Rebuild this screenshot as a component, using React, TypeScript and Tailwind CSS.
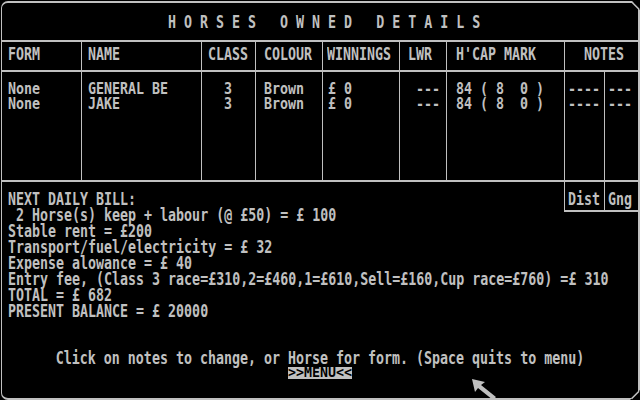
import React from "react";

type Kids = { children?: React.ReactNode; className?: string };

// One line of the 8x16 system font: DejaVu Sans Mono at an 8px advance, stretched tall.
function Ln({ children, className = "" }: Kids) {
  return (
    <div className={`h-4 leading-4 whitespace-pre scale-y-[1.35] ${className}`}>{children}</div>
  );
}

// Table rows sit a little closer together than the free text lines.
function Row({ children, className = "" }: Kids) {
  return (
    <div className={`h-[15px] leading-[15px] whitespace-pre scale-y-[1.25] ${className}`}>{children}</div>
  );
}

const cols = "grid grid-cols-[80px_120px_54px_67px_77px_47px_118px_73px]";

export default function App() {
  return (
    <div
      className="relative w-[640px] h-[400px] bg-black pt-px pl-px overflow-hidden text-[#c0c0c0] text-[13.3px] font-bold"
      style={{ fontFamily: '"DejaVu Sans Mono", "Liberation Mono", monospace' }}
    >
      <div className="h-full flex flex-col border-t-2 border-b-2 border-l border-r-2 border-[#c0c0c0] rounded-tl-[7px] rounded-bl-[7px]">
        {/* title bar */}
        <div className="h-[39px] shrink-0 border-b-2 border-[#c0c0c0] pt-[12px] pl-[166px]">
          <Ln>H O R S E S   O W N E D   D E T A I L S</Ln>
        </div>

        {/* column headings */}
        <div className={`${cols} h-[30px] shrink-0 border-b-2 border-[#c0c0c0]`}>
          <div className="border-r border-[#c0c0c0] pt-[5px] pl-[6px]"><Ln>FORM</Ln></div>
          <div className="border-r border-[#c0c0c0] pt-[5px] pl-[6px]"><Ln>NAME</Ln></div>
          <div className="border-r border-[#c0c0c0] pt-[5px] pl-[6px]"><Ln>CLASS</Ln></div>
          <div className="border-r border-[#c0c0c0] pt-[5px] pl-[8px]"><Ln>COLOUR</Ln></div>
          <div className="border-r border-[#c0c0c0] pt-[5px] pl-[4px]"><Ln>WINNINGS</Ln></div>
          <div className="border-r border-[#c0c0c0] pt-[5px] pl-[8px]"><Ln>LWR</Ln></div>
          <div className="border-r border-[#c0c0c0] pt-[5px] pl-[9px]"><Ln>H'CAP MARK</Ln></div>
          <div className="pt-[5px] pl-[19px]"><Ln>NOTES</Ln></div>
        </div>

        {/* horses */}
        <div className={`${cols} h-[110px] shrink-0 border-b-2 border-[#c0c0c0]`}>
          <div className="border-r border-[#c0c0c0] pt-[9px] pl-[6px]">
            <Row>None</Row>
            <Row>None</Row>
          </div>
          <div className="border-r border-[#c0c0c0] pt-[9px] pl-[6px]">
            <Row>GENERAL BE</Row>
            <Row>JAKE</Row>
          </div>
          <div className="border-r border-[#c0c0c0] pt-[9px] pl-[22px]">
            <Row>3</Row>
            <Row>3</Row>
          </div>
          <div className="border-r border-[#c0c0c0] pt-[9px] pl-[8px]">
            <Row>Brown</Row>
            <Row>Brown</Row>
          </div>
          <div className="border-r border-[#c0c0c0] pt-[9px] pl-[5px]">
            <Row>£ 0</Row>
            <Row>£ 0</Row>
          </div>
          <div className="border-r border-[#c0c0c0] pt-[9px] pl-[16px]">
            <Row>---</Row>
            <Row>---</Row>
          </div>
          <div className="border-r border-[#c0c0c0] pt-[9px] pl-[9px]">
            <Row>84 ( 8  0 )</Row>
            <Row>84 ( 8  0 )</Row>
          </div>
          <div className="flex">
            <div className="w-[40px] border-r border-[#c0c0c0] pt-[9px] pl-[3px]">
              <Row>----</Row>
              <Row>----</Row>
            </div>
            <div className="flex-1 pt-[9px] pl-[3px]">
              <Row>---</Row>
              <Row>---</Row>
            </div>
          </div>
        </div>

        {/* daily bill */}
        <div className="flex-1 flex">
          <div className="flex-1 min-w-0 pt-[10px] pl-[6px]">
            <Ln>NEXT DAILY BILL:</Ln>
            <Ln> 2 Horse(s) keep + labour (@ £50) = £ 100</Ln>
            <Ln>Stable rent = £200</Ln>
            <Ln>Transport/fuel/electricity = £ 32</Ln>
            <Ln>Expense alowance = £ 40</Ln>
            <Ln>Entry fee, (Class 3 race=£310,2=£460,1=£610,Sell=£160,Cup race=£760) =£ 310</Ln>
            <Ln>TOTAL = £ 682</Ln>
            <Ln>PRESENT BALANCE = £ 20000</Ln>
          </div>
          <div className="w-[74px] h-[30px] shrink-0 flex border-l border-b-2 border-[#c0c0c0]">
            <div className="w-[40px] border-r border-[#c0c0c0] pt-[10px] pl-[3px]"><Ln>Dist</Ln></div>
            <div className="flex-1 pt-[10px] pl-[3px]"><Ln>Gng</Ln></div>
          </div>
        </div>

        {/* prompt and menu button */}
        <div className="h-[47px] shrink-0 flex flex-col items-center">
          <Ln>Click on notes to change, or Horse for form. (Space quits to menu)</Ln>
          <div className="w-[64px] h-[12px] bg-[#c0c0c0] text-black text-[13.3px] leading-[12px] whitespace-pre overflow-hidden">
            <div className="scale-y-[1.1]">&gt;&gt;MENU&lt;&lt;</div>
          </div>
        </div>
      </div>

      {/* chamfered right-hand corners */}
      <svg className="absolute left-[630px] top-0" width="10" height="12" viewBox="0 0 10 12">
        <polygon points="1,0 10,0 10,10" fill="#000" />
        <line x1="1.5" y1="1.8" x2="9" y2="9.3" stroke="#c0c0c0" strokeWidth="1.6" />
      </svg>
      <svg className="absolute left-[630px] top-[388px]" width="10" height="12" viewBox="0 0 10 12">
        <polygon points="10,2 10,12 0,12" fill="#000" />
        <line x1="1.5" y1="10.7" x2="9" y2="3.2" stroke="#c0c0c0" strokeWidth="1.6" />
      </svg>

      {/* mouse pointer */}
      <svg className="absolute left-[472px] top-[379px]" width="26" height="22" viewBox="0 0 26 22">
        <polygon points="0,0 13,3 9,6 24,18 21,21 6,9 3,13" fill="#c0c0c0" />
      </svg>
    </div>
  );
}
